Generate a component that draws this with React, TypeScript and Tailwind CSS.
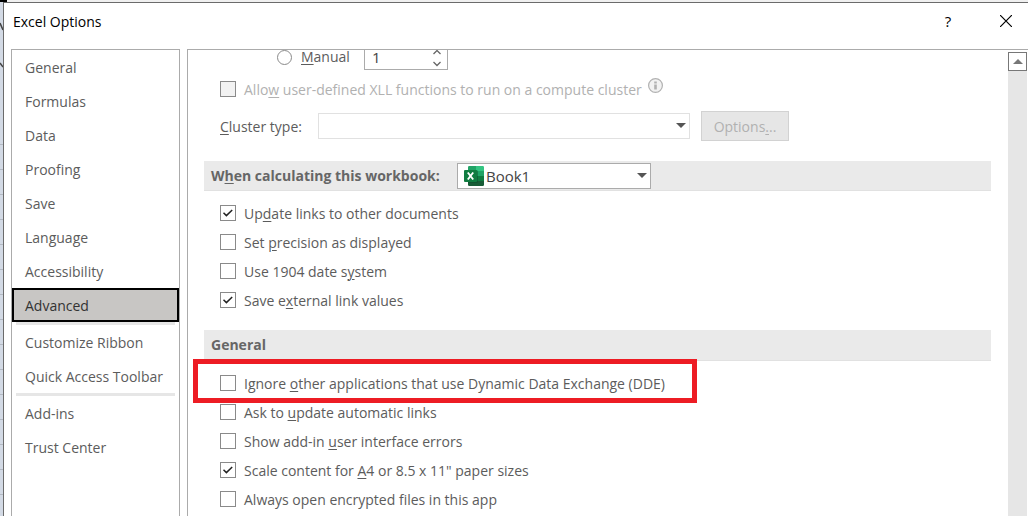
import { ReactNode, useState } from "react";

const navGroups = [
  ["General", "Formulas", "Data", "Proofing", "Save", "Language", "Accessibility", "Advanced"],
  ["Customize Ribbon", "Quick Access Toolbar"],
  ["Add-ins", "Trust Center"],
];

const sheetRows = Array.from({ length: 16 }, (_, i) => i);

function Key({ children }: { children: ReactNode }) {
  return <span className="underline decoration-1 underline-offset-2">{children}</span>;
}

function CheckRow({
  id,
  children,
  checked = false,
  disabled = false,
}: {
  id: string;
  children: ReactNode;
  checked?: boolean;
  disabled?: boolean;
}) {
  const [on, setOn] = useState(checked);
  return (
    <div className="flex h-[29px] items-center gap-2 pl-8">
      <span className="relative mb-px size-4 shrink-0">
        <input
          id={id}
          type="checkbox"
          checked={on}
          disabled={disabled}
          onChange={() => setOn(!on)}
          className="block size-4 appearance-none border border-[#8a8a8a] bg-white disabled:bg-[#f2f2f2]"
        />
        {on && (
          <svg viewBox="0 0 16 16" className="pointer-events-none absolute inset-0 size-4">
            <path d="M3.5 7.8 6.4 10.6 12.2 5" fill="none" stroke="#222" strokeWidth="1.5" />
          </svg>
        )}
      </span>
      <label htmlFor={id} className={disabled ? "text-[#b1b1b1]" : ""}>
        {children}
      </label>
    </div>
  );
}

function Caret() {
  return (
    <svg viewBox="0 0 10 5" className="pointer-events-none absolute top-[10px] right-1 h-[5px] w-[10px]">
      <path d="M0 0h10L5 5z" fill="#555" />
    </svg>
  );
}

function ExcelIcon() {
  return (
    <svg viewBox="0 0 20 20" className="pointer-events-none absolute top-[3px] left-[7px] size-5">
      <path d="M4 1.2Q4 0 5.200 0H12v5H4z" fill="#21a366" />
      <path d="M12 0h6.800Q20 0 20 1.200V5h-8z" fill="#33c481" />
      <path d="M4 5h8v5H4z" fill="#107c41" />
      <path d="M12 5h8v5h-8z" fill="#21a366" />
      <path d="M12 10h8v5h-8z" fill="#107c41" />
      <path d="M4 10h8v5h8v3.800Q20 20 18.800 20H5.200Q4 20 4 18.800z" fill="#185c37" />
      <path d="M4 4h8.500Q14 4 14 5.500V15.500Q14 17 12.500 17H4z" fill="#0c4a2a" opacity=".45" />
      <rect y="4" width="13" height="12" rx="1" fill="#107c41" />
      <path d="M3.800 6.500 9.200 13.500M9.200 6.500 3.800 13.500" stroke="#fff" strokeWidth="1.900" />
    </svg>
  );
}

export default function App() {
  const [active, setActive] = useState("Advanced");
  return (
    <div className="flex h-screen flex-col overflow-hidden bg-[#f0f0f0] font-['Open_Sans','Noto_Sans',sans-serif] text-[14px] leading-5 text-[#5c5c5c]">
      <div className="h-[2px] w-[7px] shrink-0 bg-black" />
      <div className="flex min-h-0 flex-1">
        <div className="w-[3px] shrink-0 overflow-hidden bg-[#d3dae5]">
          <svg viewBox="0 0 3 118" className="h-[118px] w-[3px]">
            <path d="M0 21 3 28M0 61 3 65" stroke="#444" strokeWidth="1.500" />
          </svg>
          {sheetRows.map((row) => (
            <div key={row} className="h-[25px] border-b border-[#b4bac4]" />
          ))}
        </div>

        <div className="flex min-w-0 flex-1 flex-col border-t border-l border-[#6b6b6b] bg-white">
          <header className="flex h-[46px] shrink-0 items-center pb-2 pl-[9px] text-black">
            <h1 className="flex-1">Excel Options</h1>
            <button aria-label="Help" className="flex h-8 w-12 items-center justify-center pb-[2px] text-[15px]">
              ?
            </button>
            <button aria-label="Close" className="ml-3 flex h-8 w-11 items-center justify-center pb-[2px]">
              <svg viewBox="0 0 12 12" className="size-3">
                <path d="M0 0 12 12M12 0 0 12" stroke="#000" strokeWidth="1.200" />
              </svg>
            </button>
          </header>

          <div className="flex min-h-0 flex-1 gap-[7px] pl-[7px]">
            <nav className="w-[169px] shrink-0 border-x border-t border-[#ababab]">
              {navGroups.map((group, i) => (
                <div key={group[0]}>
                  {i > 0 && <div className="mx-1 h-[3px] bg-[#e6e6e6]" />}
                  {group.map((item) => (
                    <button
                      key={item}
                      onClick={() => setActive(item)}
                      className={
                        item === active
                          ? "flex h-[34px] w-full items-center border-2 border-black bg-[#c8c6c4] pt-[2px] pl-[11px] text-[#333]"
                          : "flex h-[34px] w-full items-center pt-[2px] pl-[13px] whitespace-nowrap"
                      }
                    >
                      {item}
                    </button>
                  ))}
                </div>
              ))}
            </nav>

            <main className="flex min-w-0 flex-1 overflow-hidden border-t border-l border-[#ababab]">
              <div className="min-w-0 flex-1 pr-[17px] pl-4">
                <div className="-mt-[6px] flex h-[26px] items-center pl-[73px]">
                  <input
                    id="manual"
                    type="radio"
                    className="size-[15px] appearance-none rounded-full border border-[#8a8a8a] bg-white"
                  />
                  <label htmlFor="manual" className="w-[72px] pl-[9px] leading-none">
                    <Key>M</Key>anual
                  </label>
                  <div className="relative h-[26px] w-[84px]">
                    <input
                      aria-label="Iterations"
                      defaultValue="1"
                      className="h-full w-full border border-[#ababab] bg-white pl-[7px] text-[15px] text-[#444]"
                    />
                    <div className="absolute inset-y-0 right-[6px] flex flex-col justify-center gap-[6px] pt-[2px]">
                      <button aria-label="Increase">
                        <svg viewBox="0 0 10 6" className="block h-[6px] w-[10px]">
                          <path d="M1.500 5 5 1.500 8.500 5" fill="none" stroke="#666" strokeWidth="1.300" />
                        </svg>
                      </button>
                      <button aria-label="Decrease">
                        <svg viewBox="0 0 10 6" className="block h-[6px] w-[10px]">
                          <path d="M1.500 1 5 4.500 8.500 1" fill="none" stroke="#666" strokeWidth="1.300" />
                        </svg>
                      </button>
                    </div>
                  </div>
                </div>

                <div className="mt-[5px] flex">
                  <div className="-ml-4">
                    <CheckRow id="xll" disabled>
                      Allo<Key>w</Key> user-defined XLL functions to run on a compute cluster
                    </CheckRow>
                  </div>
                  <svg viewBox="0 0 15 15" className="mt-[3px] ml-[6px] size-[15px]">
                    <circle cx="7.500" cy="7.500" r="6.900" fill="#f2f2f2" stroke="#b1b1b1" strokeWidth="1.200" />
                    <path d="M6.200 3.500h2.600v2H6.200zM6.200 6.500h2.600v5H6.200z" fill="#b1b1b1" />
                  </svg>
                </div>

                <div className="mt-[7px] flex h-[30px] items-center pl-4">
                  <label htmlFor="cluster" className="w-[98px] pt-[2px]">
                    <Key>C</Key>luster type:
                  </label>
                  <div className="relative h-[26px] w-[372px]">
                    <select id="cluster" className="h-full w-full appearance-none border border-[#e1e1e1] bg-white">
                      <option></option>
                    </select>
                    <Caret />
                  </div>
                  <button
                    disabled
                    className="ml-[11px] h-[30px] w-[88px] border border-[#d2d2d2] bg-[#e6e6e6] pt-[2px] text-[#b1b1b1]"
                  >
                    Options<Key>.</Key>..
                  </button>
                </div>

                <div className="mt-5 flex h-[30px] items-center border-b border-[#e1e1e1] bg-[#eaeaea] pl-[7px]">
                  <label htmlFor="book" className="w-[246px] font-bold text-[#666]">
                    W<Key>h</Key>en calculating this workbook:
                  </label>
                  <div className="relative h-[26px] w-[194px]">
                    <select
                      id="book"
                      className="h-full w-full appearance-none border border-[#ababab] bg-white pl-7 text-[15px] text-[#444]"
                    >
                      <option>Book1</option>
                    </select>
                    <ExcelIcon />
                    <Caret />
                  </div>
                </div>

                <div className="-ml-4 pt-2">
                  <CheckRow id="links" checked>
                    Up<Key>d</Key>ate links to other documents
                  </CheckRow>
                  <CheckRow id="precision">
                    Set <Key>p</Key>recision as displayed
                  </CheckRow>
                  <CheckRow id="date1904">
                    Use 1904 date s<Key>y</Key>stem
                  </CheckRow>
                  <CheckRow id="external" checked>
                    Save e<Key>x</Key>ternal link values
                  </CheckRow>
                </div>

                <h2 className="mt-[15px] flex h-[31px] items-center border-b border-[#e1e1e1] bg-[#eaeaea] pl-[7px] font-bold text-[#666]">
                  General
                </h2>

                <div className="-ml-4 pt-2">
                  <div className="relative">
                    <CheckRow id="dde">
                      Ignore <Key>o</Key>ther applications that use Dynamic Data Exchange (DDE)
                    </CheckRow>
                    <div className="pointer-events-none absolute -top-[10px] left-[5px] h-11 w-[504px] border-5 border-[#ed1c24]" />
                  </div>
                  <CheckRow id="ask">
                    Ask to <Key>u</Key>pdate automatic links
                  </CheckRow>
                  <CheckRow id="addin">
                    Show add-in <Key>u</Key>ser interface errors
                  </CheckRow>
                  <CheckRow id="scale" checked>
                    Scale content for <Key>A</Key>4 or 8.5 x 11" paper sizes
                  </CheckRow>
                  <CheckRow id="encrypted">Always open encrypted files in this app</CheckRow>
                </div>
              </div>

              <div className="mt-[2px] mr-px w-[19px] shrink-0 bg-[#e6e6e6]">
                <button
                  aria-label="Scroll up"
                  className="flex h-[19px] w-[19px] items-center justify-center border border-[#777] bg-white"
                >
                  <svg viewBox="0 0 10 5" className="h-[5px] w-[10px]">
                    <path d="M0 5h10L5 0z" fill="#777" />
                  </svg>
                </button>
              </div>
            </main>
          </div>
        </div>
      </div>
    </div>
  );
}
